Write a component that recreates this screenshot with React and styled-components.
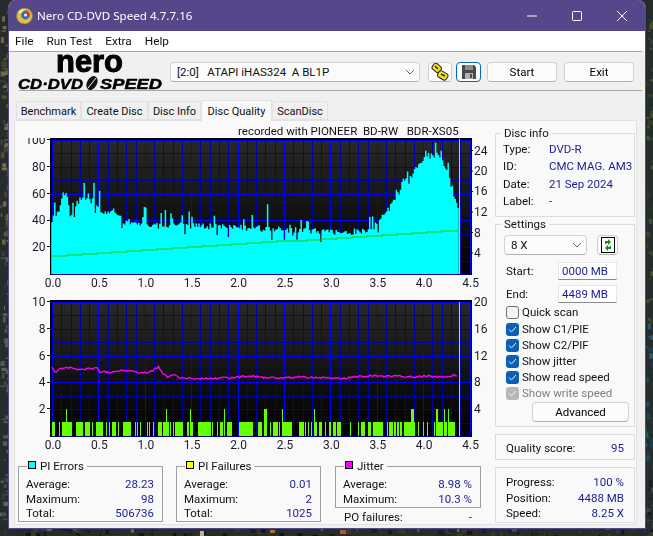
import React from 'react'
import styled, { createGlobalStyle } from 'styled-components'

const uiFont = `Roboto, "Liberation Sans", sans-serif`

const GlobalStyle = createGlobalStyle`
* { box-sizing: border-box; }
html, body { margin: 0; padding: 0; height: 100%; }
body { background: #20262a; font-family: ${uiFont}; font-size: 11.5px; color: #111; overflow: hidden; }
`

// little seeded generator so the chart noise stays the same on each load
const seeded = (s) => () => {
  s = (s * 16807) % 2147483647
  return (s - 1) / 2147483646
}

const lerp = (pts, x) => {
  for (let i = 1; i < pts.length; i++) {
    if (x <= pts[i][0]) {
      const [x0, y0] = pts[i - 1]
      const [x1, y1] = pts[i]
      return y0 + ((y1 - y0) * (x - x0)) / (x1 - x0)
    }
  }
  return pts[pts.length - 1][1]
}

/* ---------- data read off the reference ---------- */
const plotX = (v) => 52 + v * 92.8
const piEnvelope = [
  [52, 41], [56, 44], [60, 48], [62, 58], [66, 60], [70, 50], [76, 52], [82, 56], [90, 56], [96, 52],
  [104, 46], [112, 48], [118, 42], [126, 39], [140, 37], [170, 36], [200, 36], [230, 35], [260, 34],
  [285, 33], [310, 32], [340, 31], [372, 32], [378, 40], [386, 46], [392, 52], [397, 58], [404, 70],
  [412, 74], [420, 84], [428, 88], [436, 89], [443, 85], [447, 77], [452, 65], [455, 57], [459, 47],
]
const piSpikes = { 64: 68, 78: 64, 84: 68, 88: 60, 94: 68, 100: 62, 144: 50, 166: 46, 187: 49, 268: 52, 393: 71, 426: 92, 431: 90, 436: 98, 441: 92 }
const jitterLine = [
  [52, 368], [55, 372], [60, 369], [72, 367], [77, 370], [97, 368], [100, 372], [110, 372], [122, 370],
  [137, 372], [147, 373], [153, 370], [159, 367], [164, 375], [168, 377], [174, 374], [180, 378], [200, 379],
  [223, 378], [240, 377], [250, 376], [270, 378], [300, 377], [330, 378], [345, 378], [366, 376], [400, 376],
  [413, 377], [427, 376], [440, 377], [457, 375],
]
const lowBars = [
  [125, 135], [148, 150], [155, 185], [198, 218], [225, 240], [247, 249], [258, 280], [288, 292], [297, 299],
  [305, 318], [325, 328], [340, 362], [375, 378], [382, 385], [390, 392], [398, 400], [410, 413], [418, 420],
  [428, 432], [443, 455], [460, 468], [470, 476], [480, 484], [488, 492], [495, 520], [532, 538], [542, 548],
  [565, 604], [607, 609], [614, 616], [621, 623], [630, 640], [650, 665], [671, 673], [688, 720],
].map(([a, b]) => [10 + a / 3, 10 + b / 3])
  .concat([
    [0, 10], [24, 35], [42, 52], [60, 63], [70, 85], [87, 90], [97, 126], [147, 162], [165, 168], [174, 178],
    [182, 185], [192, 202], [208, 216], [225, 228], [237, 243], [248, 258], [262, 272], [300, 303], [323, 328],
    [332, 345], [354, 362], [368, 400], [410, 414], [418, 428], [433, 437], [442, 446], [450, 455], [462, 482],
    [484, 496], [505, 508], [520, 523], [532, 535], [552, 556], [558, 580], [584, 590], [595, 614],
  ].map(([a, b]) => [250 + a / 3, 250 + b / 3]))
const highBars = [
  [66, 67], [166, 167], [190, 191], [224, 225], [264, 267], [282, 283], [314, 315], [411, 414], [436, 438], [444, 445], [448, 449],
]

const menuItems = ['File', 'Run Test', 'Extra', 'Help']
const tabs = [
  { label: 'Benchmark', width: 65 },
  { label: 'Create Disc', width: 67 },
  { label: 'Disc Info', width: 53 },
  { label: 'Disc Quality', width: 71, active: true },
  { label: 'ScanDisc', width: 56 },
]
const checks = [
  { label: 'Show C1/PIE', on: true },
  { label: 'Show C2/PIF', on: true },
  { label: 'Show jitter', on: true },
  { label: 'Show read speed', on: true },
  { label: 'Show write speed', on: true, disabled: true },
]

/* ---------- chrome ---------- */
const Backdrop = styled.svg`
  position: fixed;
  inset: 0;
  z-index: 0;
`
const Window = styled.div`
  position: relative;
  z-index: 1;
  margin-left: 8px;
  width: 638px;
  height: 529px;
  background: #f0f0f0;
  border: 1px solid #56478a;
  border-top: 0;
  border-radius: 8px 8px 0 0;
  overflow: hidden;
`
const TitleBar = styled.div`
  height: 31px;
  background: #56478a;
  color: #fff;
  display: flex;
  align-items: center;
  padding-left: 7px;
  gap: 4px;
  font-family: "Noto Sans", sans-serif;
  font-size: 11.6px;
`
const WindowButtons = styled.div`
  margin-left: auto;
  display: flex;
  align-items: center;
  gap: 35px;
  padding-right: 18px;
`
const MenuBar = styled.div`
  height: 20px;
  background: #fff;
  display: flex;
  align-items: center;
  padding-left: 6px;
  font-size: 11.8px;
`
const MenuItem = styled.span`
  margin-right: 13px;
`
const Rule = styled.div`
  height: 1px;
  background: #a6a6a6;
  margin: 0 3px 0 ${({ $inset }) => $inset || 0}px;
`
const Toolbar = styled.div`
  height: 38px;
  display: flex;
  align-items: center;
  padding: 2px 0 0 9px;
`
const Logo = styled.svg`
  align-self: flex-start;
  margin-top: -2px;
  margin-right: 6px;
  flex: none;
`
const Combo = styled.div`
  height: 20px;
  width: ${({ $w }) => $w}px;
  background: #fbfbfb;
  border: 1px solid #d2d2d2;
  border-bottom-color: #b0b0b0;
  border-radius: 4px;
  display: flex;
  align-items: center;
  padding: 0 4px 0 6px;
  white-space: pre;
`
const Chevron = styled.svg`
  margin-left: auto;
`
const PushButton = styled.button`
  height: ${({ $h }) => $h || 20}px;
  width: ${({ $w }) => $w}px;
  margin-left: ${({ $ml }) => $ml || 0}px;
  margin-top: ${({ $mt }) => $mt || 0}px;
  padding: 0;
  background: #fcfcfc;
  border: 1px solid ${({ $focus }) => ($focus ? '#0067c0' : '#d0d0d0')};
  border-bottom-color: ${({ $focus }) => ($focus ? '#0067c0' : '#b0b0b0')};
  border-radius: 4px;
  font: inherit;
  color: #000;
  display: flex;
  align-items: center;
  justify-content: center;
`
const TabRow = styled.div`
  height: 29px;
  display: flex;
  align-items: flex-end;
  padding-left: 7px;
  position: relative;
  z-index: 2;
`
const Tab = styled.div`
  width: ${({ $w }) => $w}px;
  height: ${({ $active }) => ($active ? 21 : 19)}px;
  margin-bottom: ${({ $active }) => ($active ? -1 : 0)}px;
  padding-top: ${({ $active }) => ($active ? 0 : 2)}px;
  background: ${({ $active }) => ($active ? '#f9f9f9' : '#f0f0f0')};
  border: 1px solid #e2e2e2;
  border-bottom: ${({ $active }) => ($active ? '0' : '1px solid #e2e2e2')};
  display: flex;
  align-items: center;
  justify-content: center;
  font-size: 11px;
  white-space: nowrap;
`
const Panel = styled.div`
  margin-left: 5px;
  width: 623px;
  height: 405px;
  background: #f9f9f9;
  border: 1px solid #e2e2e2;
  display: flex;
  padding-left: 3px;
`
const LeftColumn = styled.div`
  width: 477px;
  flex: none;
`
const ChartCaption = styled.div`
  height: 17px;
  padding: 3px 0 0 220px;
  line-height: 14px;
  white-space: pre;
`
const Chart = styled.svg`
  display: block;
  text {
    font-family: ${uiFont};
    font-size: 12px;
    fill: #1c1c2c;
  }
`
const GroupRow = styled.div`
  display: flex;
  margin-top: 7px;
`
const Group = styled.fieldset`
  margin: 0;
  min-width: 0;
  width: ${({ $w }) => $w}px;
  height: ${({ $h }) => $h}px;
  margin-right: ${({ $mr }) => $mr || 0}px;
  padding: ${({ $pad }) => $pad || '4px 8px 0 7px'};
  border: 1px solid ${({ $light }) => ($light ? '#dcdcdc' : '#a0a0a0')};
`
const GroupTitle = styled.legend`
  margin-left: ${({ $ml }) => $ml ?? 1}px;
  padding: 0 3px 0 ${({ $pl }) => $pl ?? 1}px;
  height: 14px;
  line-height: 14px;
  display: flex;
  align-items: center;
  gap: 4px;
  white-space: nowrap;
`
const Swatch = styled.i`
  width: 8px;
  height: 8px;
  background: ${({ $color }) => $color};
  border: 1px solid #000;
  margin-top: -2px;
`
const StatRow = styled.div`
  height: ${({ $h }) => $h || 14.5}px;
  display: flex;
  justify-content: space-between;
  align-items: center;
`
const StatValue = styled.span`
  color: #1c1c96;
  white-space: nowrap;
`
const JitterColumn = styled.div`
  width: 146px;
`
const PoRow = styled(StatRow)`
  padding: 0 9px;
  margin-top: 2px;
`
const RightColumn = styled.div`
  width: 140px;
  padding-top: 5px;
`
const InfoRow = styled.div`
  height: 17.5px;
  display: flex;
  align-items: center;
`
const InfoLabel = styled.span`
  width: 46px;
  flex: none;
`
const SettingRow = styled.div`
  display: flex;
  align-items: center;
  margin-bottom: ${({ $mb }) => $mb || 0}px;
  padding-left: ${({ $pl }) => $pl || 0}px;
`
const FieldLabel = styled.span`
  width: 52px;
`
const Field = styled.div`
  width: 59px;
  height: 18px;
  background: #fff;
  border: 1px solid #e6e6e6;
  border-bottom: 1px solid #8a8a8a;
  padding-left: 3px;
  line-height: 16px;
  color: #1c1c96;
`
const CheckRow = styled.div`
  height: 16px;
  display: flex;
  align-items: center;
  gap: 3px;
  padding-left: 10px;
  color: ${({ $disabled }) => ($disabled ? '#7e7e7e' : '#111')};
`
const CheckList = styled.div`
  margin-top: 1px;
`
const Box = styled.span`
  width: 13px;
  height: 13px;
  border-radius: 3px;
  flex: none;
  display: flex;
  align-items: center;
  justify-content: center;
  background: ${({ $on, $disabled }) => ($disabled ? '#b8b8b8' : $on ? '#0a62b8' : '#f4f4f4')};
  border: ${({ $on }) => ($on ? '0' : '1px solid #6e6e6e')};
`
const PlainBox = styled.div`
  height: ${({ $h }) => $h}px;
  margin-top: 7px;
  border: 1px solid #dcdcdc;
  padding: ${({ $pad }) => $pad};
`

/* ---------- drawings ---------- */
const AppIcon = () => (
  <svg width="17" height="18" viewBox="0 0 17 18">
    <circle cx="8.5" cy="9" r="8" fill="#d8bf4a" stroke="#8a7a2a" strokeWidth="0.8" />
    <path d="M2 6a7 7 0 0 1 7-4l-1 5z" fill="#e8e2b0" />
    <circle cx="9.5" cy="8" r="4.4" fill="#3f66b0" />
    <path d="M9.5 8V3.6a4.4 4.4 0 0 1 4.4 4.4z" fill="#c8442c" />
    <circle cx="9.5" cy="8" r="1.5" fill="#eee" />
  </svg>
)

const MinIcon = () => (
  <svg width="10" height="10" viewBox="0 0 10 10"><path d="M0 5h10" stroke="#fff" /></svg>
)
const MaxIcon = () => (
  <svg width="10" height="10" viewBox="0 0 10 10">
    <rect x=".5" y=".5" width="9" height="9" rx="1" fill="none" stroke="#fff" />
  </svg>
)
const CloseIcon = () => (
  <svg width="10" height="10" viewBox="0 0 10 10"><path d="M0 0l10 10M10 0L0 10" stroke="#fff" /></svg>
)

const ChevronDown = () => (
  <Chevron width="10" height="6" viewBox="0 0 10 6">
    <path d="M1 1l4 4 4-4" fill="none" stroke="#666" />
  </Chevron>
)

const KeysIcon = () => (
  <svg width="18" height="18" viewBox="0 0 18 18">
    <g stroke="#222" strokeWidth="1" fill="#f4e21c">
      <rect x="1" y="1" width="9" height="7" rx="2.5" transform="rotate(40 5 5)" />
      <rect x="7" y="9" width="10" height="7" rx="2.5" transform="rotate(30 12 12)" />
    </g>
    <path d="M4 3l3 3M10 11l4 2" stroke="#333" strokeWidth="1.6" />
  </svg>
)

const FloppyIcon = () => (
  <svg width="14" height="14" viewBox="0 0 14 14">
    <path d="M0 0h12l2 2v12H0z" fill="#4a4a4a" />
    <rect x="3" y="0" width="8" height="5" fill="#8c8c8c" />
    <rect x="3" y="8" width="8" height="6" fill="#b4b4b4" />
    <rect x="8" y="9" width="2" height="4" fill="#4a4a4a" />
  </svg>
)

const SwapIcon = () => (
  <svg width="14" height="16" viewBox="0 0 14 16">
    <rect x=".5" y=".5" width="13" height="15" fill="#fff" stroke="#000" />
    <path d="M4 7V4h3V2l3 3-3 3V6H5.5v1z" fill="#1a8a1a" />
    <path d="M10 9v3H7v2l-3-3 3-3v2h1.5V9z" fill="#1a8a1a" />
  </svg>
)

const CheckMark = () => (
  <svg width="9" height="7" viewBox="0 0 9 7">
    <path d="M1 3.5l2.4 2.4L8 1" fill="none" stroke="#e8f2ff" strokeWidth="1" />
  </svg>
)

const NeroLogo = () => (
  <Logo width="146" height="38" viewBox="0 0 146 38">
    <text x="38" y="20" fontFamily="Liberation Sans" fontWeight="700" fontSize="32" textLength="67"
      lengthAdjust="spacingAndGlyphs" stroke="#000" strokeWidth="1.1">nero</text>
    <text x="0" y="37" fontFamily="Liberation Sans" fontWeight="700" fontStyle="italic" fontSize="15" textLength="65"
      lengthAdjust="spacingAndGlyphs" stroke="#000" strokeWidth="0.5">CD·DVD</text>
    <ellipse cx="74" cy="31" rx="5" ry="7.5" transform="rotate(28 74 31)" fill="#111" />
    <path d="M70 36L78 26" stroke="#f0f0f0" strokeWidth="1" />
    <text x="82" y="37" fontFamily="Liberation Sans" fontWeight="700" fontStyle="italic" fontSize="15" textLength="62"
      lengthAdjust="spacingAndGlyphs" stroke="#000" strokeWidth="0.5">SPEED</text>
  </Logo>
)

const Wallpaper = () => {
  const rnd = seeded(4711)
  const patches = []
  const colorAt = (x, y) => {
    if (y > 528) return ['#1a1c26', '#2a2a2a', '#3a3a28', '#12141c'][Math.floor(rnd() * 4)]
    if (x > 640) {
      if (y < 320) return ['#2f4026', '#1f3524', '#46502c', '#183028'][Math.floor(rnd() * 4)]
      if (y < 480) return ['#1c4a5a', '#2a5a6a', '#26343a', '#18404e'][Math.floor(rnd() * 4)]
      return ['#20282c', '#3a4044', '#161c20'][Math.floor(rnd() * 3)]
    }
    if (y < 250) return ['#4c5230', '#6a6a40', '#39452c', '#7a7046'][Math.floor(rnd() * 4)]
    return ['#3c5046', '#5a6a58', '#2c3c38', '#486058'][Math.floor(rnd() * 4)]
  }
  for (let i = 0; i < 420; i++) {
    const onSide = i % 3
    const x = onSide === 0 ? rnd() * 9 : onSide === 1 ? 644 + rnd() * 9 : rnd() * 653
    const y = onSide === 2 ? 526 + rnd() * 10 : rnd() * 536
    patches.push(<rect key={i} x={x} y={y} width={1 + rnd() * 5} height={1 + rnd() * 5} fill={colorAt(x, y)} />)
  }
  return (
    <Backdrop width="653" height="536" viewBox="0 0 653 536">
      <rect width="653" height="536" fill="#262c2c" />
      {patches}
      <rect x="200" y="531" width="4" height="5" fill="#b8b0a0" />
      <rect x="270" y="530" width="5" height="3" fill="#a8702c" />
      <rect x="340" y="530" width="6" height="4" fill="#a85a2c" />
    </Backdrop>
  )
}

/* ---------- charts ---------- */
const Grid = ({ id, top, bottom, major }) => {
  const rows = []
  for (let i = 0; i <= 10; i++) rows.push(top + ((bottom - top) * i) / 10)
  const cols = []
  for (let v = 0; v <= 45; v++) cols.push(v)
  return (
    <g shapeRendering="crispEdges">
      <defs>
        <linearGradient id={id} x1="0" y1="0" x2="0" y2="1">
          <stop offset="0" stopColor="#282828" />
          <stop offset="1" stopColor="#000" />
        </linearGradient>
      </defs>
      <rect x="50" y={top - 2} width="422" height={bottom - top + 3} fill="#000" />
      <rect x="52" y={top} width="418" height={bottom - top} fill={`url(#${id})`} />
      {cols.map((v) => {
        const x = Math.round(plotX(v / 10))
        return <rect key={v} x={x} y={top} width="1" height={bottom - top} fill={v % 5 === 0 ? '#0000ff' : '#0000a8'} />
      })}
      {rows.map((y, i) => (
        <rect key={i} x="51" y={Math.round(y)} width="419" height="1" fill={major.includes(i) ? '#0000ff' : '#0000a8'} />
      ))}
    </g>
  )
}

const Labels = ({ left, right, xBase }) => (
  <g>
    {left.map(([t, y]) => (
      <g key={t}>
        <text x="45.5" y={y + 4.5} textAnchor="end">{t}</text>
        <path d={`M47 ${Math.round(y) + 0.5}H50`} stroke="#111" />
      </g>
    ))}
    {right.map(([t, y]) => (
      <text key={t} x="474" y={y + 4.5}>{t}</text>
    ))}
    {[0, 0.5, 1, 1.5, 2, 2.5, 3, 3.5, 4, 4.5].map((v) => (
      <text key={v} x={plotX(v) + 1} y={xBase} textAnchor="middle">{v.toFixed(1)}</text>
    ))}
  </g>
)

const PiChart = () => {
  const rnd = seeded(90210)
  let d = ''
  for (let x = 52; x < 459; x += 1.4) {
    let v = lerp(piEnvelope, x)
    const r = rnd()
    v += (rnd() - 0.5) * 5
    if (r > 0.93) v += 5 + rnd() * 7
    else if (r < 0.05) v -= 4 + rnd() * 5
    const spike = piSpikes[Math.round(x)]
    if (spike) v = spike
    v = Math.min(98, v)
    d += `M${x.toFixed(1)} 274V${(274 - v * 1.34).toFixed(1)}`
  }
  let speed = 'M52 256'
  for (let x = 52; x <= 442; x += 15) {
    speed += `H${x}V${(255.7 - ((x - 52) / 407) * 25.7).toFixed(0)}`
  }
  speed += 'H457V230'
  return (
    <Chart width="477" height="152" viewBox="18 138 477 152">
      <Grid id="piGrad" top={140} bottom={274} major={[0, 4, 6]} />
      <path d={d} stroke="#00ffff" strokeWidth="1.5" fill="none" />
      <path d={speed} stroke="#22c800" strokeWidth="1.2" fill="none" />
      <path d="M459.5 139V274" stroke="#c8c8c8" strokeWidth="1" />
      <path d="M470 150.5h3M470 171h3M470 191.5h3M470 212h3M470 232.5h3M470 253h3" stroke="#111" />
      <Labels
        left={[['100', 139], ['80', 166], ['60', 193], ['40', 219.5], ['20', 246]]}
        right={[['24', 150.5], ['20', 170], ['16', 190.5], ['12', 211], ['8', 232], ['4', 252.5]]}
        xBase={287}
      />
    </Chart>
  )
}

const PifChart = () => {
  const rnd = seeded(1234)
  let line = ''
  for (let x = 52; x <= 457; x += 1.5) {
    const y = lerp(jitterLine, x) + (rnd() - 0.5) * 2
    line += `${line ? 'L' : 'M'}${x.toFixed(1)} ${y.toFixed(1)}`
  }
  return (
    <Chart width="477" height="162" viewBox="18 290 477 162">
      <Grid id="pifGrad" top={302} bottom={436} major={[0, 4, 6]} />
      <g shapeRendering="crispEdges">
        {lowBars.map(([a, b], i) => (
          <rect key={i} x={a} y="422" width={b - a} height="14" fill="#66ff00" />
        ))}
        {highBars.map(([a, b], i) => (
          <rect key={i} x={a} y="409" width={b - a} height="27" fill="#66ff00" />
        ))}
      </g>
      <path d={line} stroke="#ff00ff" strokeWidth="1.3" fill="none" />
      <path d="M459.5 302V436" stroke="#c8c8c8" strokeWidth="1" />
      <Labels
        left={[['10', 301], ['8', 328], ['6', 355], ['4', 381.5], ['2', 408]]}
        right={[['20', 301], ['16', 328], ['12', 355], ['8', 381], ['4', 408]]}
        xBase={449}
      />
    </Chart>
  )
}

const StatGroup = ({ title, color, rows, width, height, mr }) => (
  <Group $w={width} $h={height} $mr={mr}>
    <GroupTitle>
      <Swatch $color={color} />
      {title}
    </GroupTitle>
    {rows.map(([label, value]) => (
      <StatRow key={label}>
        <span>{label}</span>
        <StatValue>{value}</StatValue>
      </StatRow>
    ))}
  </Group>
)

export default function App() {
  return (
    <>
      <GlobalStyle />
      <Wallpaper />
      <Window>
        <TitleBar>
          <AppIcon />
          Nero CD-DVD Speed 4.7.7.16
          <WindowButtons>
            <MinIcon />
            <MaxIcon />
            <CloseIcon />
          </WindowButtons>
        </TitleBar>
        <MenuBar>
          {menuItems.map((m) => <MenuItem key={m}>{m}</MenuItem>)}
        </MenuBar>
        <Rule />
        <Toolbar>
          <NeroLogo />
          <Combo $w={250}>
            {'[2:0]   ATAPI iHAS324  A BL1P'}
            <ChevronDown />
          </Combo>
          <PushButton $w={24} $ml={8}><KeysIcon /></PushButton>
          <PushButton $w={25} $ml={4} $focus><FloppyIcon /></PushButton>
          <PushButton $w={70} $ml={6}>Start</PushButton>
          <PushButton $w={70} $ml={7}>Exit</PushButton>
        </Toolbar>
        <Rule $inset={10} />
        <TabRow>
          {tabs.map((t) => <Tab key={t.label} $w={t.width} $active={t.active}>{t.label}</Tab>)}
        </TabRow>
        <Panel>
          <LeftColumn>
            <ChartCaption>{'recorded with PIONEER  BD-RW   BDR-XS05'}</ChartCaption>
            <PiChart />
            <PifChart />
            <GroupRow>
              <StatGroup title="PI Errors" color="#00ffff" width={145} height={63} mr={13}
                rows={[['Average:', '28.23'], ['Maximum:', '98'], ['Total:', '506736']]} />
              <StatGroup title="PI Failures" color="#ffff00" width={145} height={63} mr={14}
                rows={[['Average:', '0.01'], ['Maximum:', '2'], ['Total:', '1025']]} />
              <JitterColumn>
                <StatGroup title="Jitter" color="#ff00ff" width={146} height={49}
                  rows={[['Average:', '8.98 %'], ['Maximum:', '10.3 %']]} />
                <PoRow>
                  <span>PO failures:</span>
                  <StatValue>-</StatValue>
                </PoRow>
              </JitterColumn>
            </GroupRow>
          </LeftColumn>
          <RightColumn>
            <Group $w={140} $h={91} $light $pad="0 0 0 7px">
              <GroupTitle $ml={-2} $pl={3}>Disc info</GroupTitle>
              <InfoRow><InfoLabel>Type:</InfoLabel><StatValue>DVD-R</StatValue></InfoRow>
              <InfoRow><InfoLabel>ID:</InfoLabel><StatValue>CMC MAG. AM3</StatValue></InfoRow>
              <InfoRow><InfoLabel>Date:</InfoLabel><StatValue>21 Sep 2024</StatValue></InfoRow>
              <InfoRow><InfoLabel>Label:</InfoLabel><StatValue>-</StatValue></InfoRow>
            </Group>
            <Group $w={140} $h={210} $light $pad="4px 0 0 0">
              <GroupTitle $ml={5} $pl={3}>Settings</GroupTitle>
              <SettingRow $mb={7} $pl={8}>
                <Combo $w={83}>8 X<ChevronDown /></Combo>
                <PushButton $w={21} $ml={10}><SwapIcon /></PushButton>
              </SettingRow>
              <SettingRow $mb={5} $pl={10}>
                <FieldLabel>Start:</FieldLabel>
                <Field>0000 MB</Field>
              </SettingRow>
              <SettingRow $mb={1} $pl={10}>
                <FieldLabel>End:</FieldLabel>
                <Field>4489 MB</Field>
              </SettingRow>
              <CheckRow><Box />Quick scan</CheckRow>
              <CheckList>
                {checks.map((c) => (
                  <CheckRow key={c.label} $disabled={c.disabled}>
                    <Box $on={c.on} $disabled={c.disabled}><CheckMark /></Box>
                    {c.label}
                  </CheckRow>
                ))}
              </CheckList>
              <SettingRow $pl={36}>
                <PushButton $w={97} $mt={1}>Advanced</PushButton>
              </SettingRow>
            </Group>
            <PlainBox $h={26} $pad="5px 10px 0 10px">
              <StatRow $h={16}>
                <span>Quality score:</span>
                <StatValue>95</StatValue>
              </StatRow>
            </PlainBox>
            <PlainBox $h={56} $pad="6.5px 10px 0 10px">
              <StatRow $h={15.5}><span>Progress:</span><StatValue>100 %</StatValue></StatRow>
              <StatRow $h={15.5}><span>Position:</span><StatValue>4488 MB</StatValue></StatRow>
              <StatRow $h={15.5}><span>Speed:</span><StatValue>8.25 X</StatValue></StatRow>
            </PlainBox>
          </RightColumn>
        </Panel>
      </Window>
    </>
  )
}
